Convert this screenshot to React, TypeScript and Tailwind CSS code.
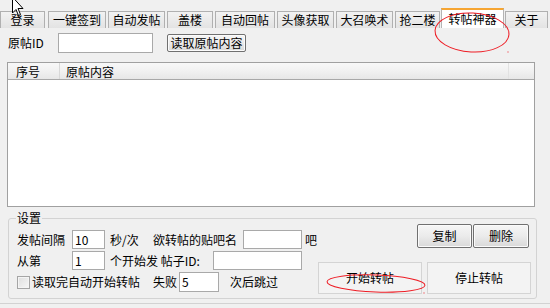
import React from 'react'

const TABS = [
  { label: '登录', w: 'w-[45px]', ml: 'ml-0' },
  { label: '一键签到', w: 'w-[58px]', ml: 'ml-[3px]' },
  { label: '自动发帖', w: 'w-[57px]', ml: 'ml-[2px]' },
  { label: '盖楼', w: 'w-[46px]', ml: 'ml-[2px]' },
  { label: '自动回帖', w: 'w-[60px]', ml: 'ml-[2px]' },
  { label: '头像获取', w: 'w-[57px]', ml: 'ml-[2px]' },
  { label: '大召唤术', w: 'w-[57px]', ml: 'ml-[2px]' },
  { label: '抢二楼', w: 'w-[45px]', ml: 'ml-[2px]' },
  { label: '转帖神器', w: 'w-[63px]', ml: 'ml-[1px]', active: true },
  { label: '关于', w: 'w-[43px]', ml: 'ml-[1px]' },
]

function Field({ className, value }: { className: string; value?: string }) {
  return (
    <div
      className={`border border-[#a9a9a9] bg-white pl-[2px] flex items-center leading-none ${className}`}
    >
      {value}
    </div>
  )
}

function Win7Button({ className, children }: { className: string; children: React.ReactNode }) {
  return (
    <div
      className={`flex items-center justify-center rounded-[2px] border border-[#707070] bg-gradient-to-b from-[#f6f6f6] via-[#ebebeb] to-[#d9d9d9] shadow-[inset_0_0_0_1px_#fbfbfb] leading-none ${className}`}
    >
      {children}
    </div>
  )
}

function FlatButton({ children }: { children: React.ReactNode }) {
  return (
    <div className="flex h-[32px] w-[104px] items-center justify-center border border-[#d4d4d4] bg-[#f3f3f3] leading-none">
      {children}
    </div>
  )
}

export default function App() {
  return (
    <div className="relative h-[308px] w-[550px] overflow-hidden bg-[#f0f0f0] font-['Noto_Sans_CJK_SC','Noto_Sans',sans-serif] text-[12px] text-black">
      {/* tab strip */}
      <div className="flex h-[28px] items-end">
        {TABS.map((t) =>
          t.active ? (
            <div
              key={t.label}
              className={`${t.w} ${t.ml} flex h-[20px] items-center justify-center border-x border-t-2 border-x-[#b4b4b4] border-t-[#f6a532] bg-white leading-none`}
            >
              {t.label}
            </div>
          ) : (
            <div
              key={t.label}
              className={`${t.w} ${t.ml} flex h-[17px] items-center justify-center border-x border-t border-[#b0b0b0] bg-gradient-to-b from-[#f2f2f2] to-[#e3e3e3] leading-none`}
            >
              {t.label}
            </div>
          )
        )}
      </div>

      {/* post id row */}
      <div className="mt-[5px] flex h-[20px] items-center">
        <span className="w-[58px] pl-[8px]">原帖ID</span>
        <Field className="h-[20px] w-[95px]" />
        <Win7Button className="ml-[14px] h-[18px] w-[79px]">读取原帖内容</Win7Button>
      </div>

      {/* list view */}
      <div className="ml-[7px] mt-[9px] h-[145px] w-[528px] border border-[#a0a0a0] bg-white">
        <div className="flex h-[17px] border-b border-[#a8a8a8] bg-gradient-to-b from-[#f8f8f8] via-[#f1f1f1] to-[#e7e7e7] leading-[14px]">
          <div className="w-[52px] border-r border-[#d8d8d8] pl-[8px] pt-[2px]">序号</div>
          <div className="w-[449px] border-r border-[#e2e2e2] pl-[6px] pt-[2px]">原帖内容</div>
          <div className="flex-1" />
        </div>
      </div>

      {/* settings group */}
      <fieldset className="ml-[8px] mt-[4px] h-[88px] w-[529px] rounded-[3px] border border-[#d3d3d3]">
        <legend className="ml-[7px] px-[1px] leading-[14px]">设置</legend>
        <div className="flex">
          <div className="flex flex-col gap-[2px] pl-[8px] pt-[5px]">
            <div className="flex h-[19px] items-center">
              <span className="w-[55px]">发帖间隔</span>
              <Field className="h-[19px] w-[33px]" value="10" />
              <span className="ml-[5px] w-[43px]">秒/次</span>
              <span className="w-[90px]">欲转帖的贴吧名</span>
              <Field className="h-[19px] w-[59px]" />
              <span className="ml-[3px]">吧</span>
            </div>
            <div className="flex h-[19px] items-center">
              <span className="w-[55px]">从第</span>
              <Field className="h-[19px] w-[33px]" value="1" />
              <span className="ml-[5px] w-[103px]">个开始发 帖子ID:</span>
              <Field className="h-[19px] w-[89px]" />
            </div>
            <div className="flex h-[20px] items-center">
              <div className="h-[13px] w-[13px] border border-[#a5a5a5] bg-gradient-to-br from-[#dedede] to-[#f7f7f7] shadow-[inset_0_0_0_1px_#f4f4f4]" />
              <span className="ml-[2px] w-[121px]">读取完自动开始转帖</span>
              <span className="w-[26px]">失败</span>
              <Field className="h-[20px] w-[40px]" value="5" />
              <span className="ml-[11px]">次后跳过</span>
            </div>
          </div>
          <div className="ml-auto mt-[-1px] flex flex-col items-end pr-[5px]">
            <div className="mr-[2px] flex gap-[1px]">
              <Win7Button className="h-[24px] w-[55px]">复制</Win7Button>
              <Win7Button className="h-[24px] w-[56px]">删除</Win7Button>
            </div>
            <div className="mt-[14px] flex gap-[5px]">
              <FlatButton>开始转帖</FlatButton>
              <FlatButton>停止转帖</FlatButton>
            </div>
          </div>
        </div>
      </fieldset>

      <div className="mt-[4px] h-px w-full bg-[#d2d2d2]" />

      {/* hand-drawn annotations + mouse cursor */}
      <svg className="pointer-events-none absolute left-0 top-0" width="550" height="308" viewBox="0 0 550 308">
        <ellipse cx="472" cy="32.5" rx="37" ry="19.5" fill="none" stroke="#ee1c24" strokeWidth="1" transform="rotate(3 472 32.5)" />
        <rect x="507.5" y="51.5" width="1" height="1" fill="#ee1c24" />
        <ellipse cx="376" cy="283.5" rx="49" ry="8.5" fill="none" stroke="#ee1c24" strokeWidth="1" transform="rotate(2 376 283.5)" />
        <rect x="423.5" y="292.5" width="1" height="1" fill="#ee1c24" />
        <path
          d="M12.5 -3 L12.5 13 L16 9.5 L18.5 15.5 L20.5 14.5 L18 8.5 L23 8.5 Z"
          fill="#fff"
          stroke="#000"
          strokeWidth="1"
          strokeLinejoin="miter"
        />
      </svg>
    </div>
  )
}
